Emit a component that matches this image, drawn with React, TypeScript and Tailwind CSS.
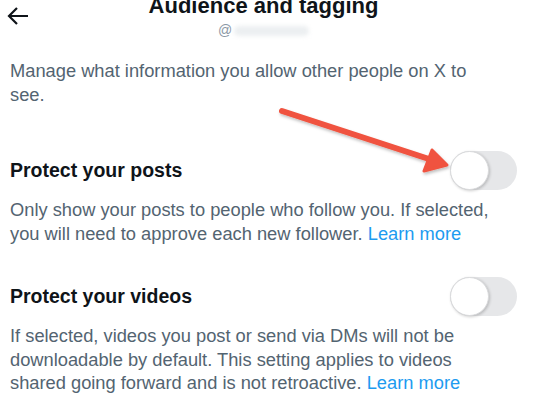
function Toggle() {
  return (
    <div className="relative h-[39px] w-[67px] shrink-0 rounded-full bg-[#e6e7e9]">
      <div className="absolute left-0 top-0 h-[39px] w-[39px] rounded-full border border-[#d9dadc] bg-white shadow-[1px_1px_3px_rgba(0,0,0,0.2)]" />
    </div>
  );
}

function SettingRow({ title, children, top }: { title: string; children: React.ReactNode; top: string }) {
  return (
    <div className={top}>
      <div className="flex items-center justify-between">
        <h2 className="text-[19.5px] font-bold text-[#0f1419]">{title}</h2>
        <Toggle />
      </div>
      <p className="mt-[8px] pr-[20px] text-[18.3px] leading-[23.5px] text-[#536471]">{children}</p>
    </div>
  );
}

export default function App() {
  return (
    <div
      className="relative h-[400px] w-[534px] overflow-hidden bg-white pl-[10px] pr-[17px]"
      style={{ fontFamily: '"Liberation Sans", Arial, sans-serif' }}
    >
      <div className="relative -mt-[8px] flex flex-col items-center">
        <svg
          className="absolute left-[-4px] top-[13px]"
          width="24"
          height="22"
          viewBox="0 0 24 22"
          fill="none"
          stroke="#0f1419"
          strokeWidth="2.2"
        >
          <path d="M22 11H3M11 3l-8 8 8 8" />
        </svg>
        <h1 className="text-[22px] font-bold leading-[28px] text-[#0f1419]">Audience and tagging</h1>
        <div className="flex items-center gap-[2px] text-[14px] text-[#8b98a5]">
          <span>@</span>
          <span className="h-[10px] w-[75px] rounded-full bg-[#eceff1] blur-[2px]" />
        </div>
      </div>

      <p className="mt-[18px] pr-[23px] text-[18.3px] leading-[24px] text-[#536471]">
        Manage what information you allow other people on X to see.
      </p>

      <SettingRow title="Protect your posts" top="mt-[44px]">
        Only show your posts to people who follow you. If selected, you will need to approve each new follower.{" "}
        <span className="text-[#1d9bf0]">Learn more</span>
      </SettingRow>

      <SettingRow title="Protect your videos" top="mt-[32px]">
        If selected, videos you post or send via DMs will not be downloadable by default. This setting applies to videos
        shared going forward and is not retroactive. <span className="text-[#1d9bf0]">Learn more</span>
      </SettingRow>

      <div className="mx-auto mt-[6px] h-[3px] w-[8px] bg-[#1d9bf0]" />

      <svg className="pointer-events-none absolute left-0 top-0" width="534" height="400">
        <defs>
          <filter id="sh" x="-10%" y="-50%" width="120%" height="200%">
            <feDropShadow dx="1" dy="2" stdDeviation="1.5" floodColor="#000" floodOpacity="0.25" />
          </filter>
        </defs>
        <g filter="url(#sh)" fill="#f0533f" stroke="#f0533f" strokeLinecap="round" strokeLinejoin="round">
          <path d="M282 111 L432 160" strokeWidth="6" fill="none" />
          <path d="M447 165 L424 171 L432 150 Z" strokeWidth="3" />
        </g>
      </svg>
    </div>
  );
}
